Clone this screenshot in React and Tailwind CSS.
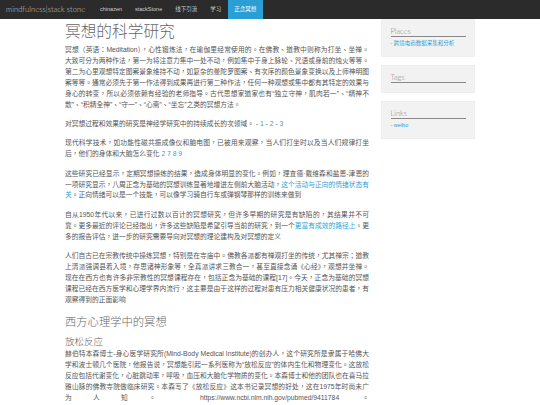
const cjk = "font-['Liberation_Sans','Noto_Sans_CJK_TC',sans-serif]"

function NavLink({ children, active }) {
  return (
    <a className={`flex items-center px-[6.5px] text-[5.5px] ${active ? 'bg-[#2a9fd6] text-white' : 'text-[#d0d0d0]'}`}>
      {children}
    </a>
  )
}

function Panel({ title, children, className }) {
  return (
    <div className={`bg-[#f2f2f2] border border-[#eeeeee] px-[8.5px] ${className}`}>
      <div className="border-b border-[#888888] text-[7.5px] leading-[9px] font-light text-[#888888] font-['Lato',sans-serif] mt-[6.5px]">
        {title}
      </div>
      {children}
    </div>
  )
}

function A({ children }) {
  return <a className="text-[#2a9fd6]">{children}</a>
}

function P({ children }) {
  return <p className="mb-[8.5px] text-justify">{children}</p>
}

export default function App() {
  return (
    <div className={`h-[405px] w-[540px] overflow-hidden bg-white ${cjk}`}>
      <nav className="flex h-[19px] items-stretch bg-[#2b2b2b]">
        <a className="flex w-[93.5px] items-center pl-[6px] text-[7.5px] tracking-[0.1px] text-[#cccccc] font-['Lato','Noto_Sans_CJK_SC',sans-serif] font-light">
          mindfulness|stack stone
        </a>
        <NavLink>chinazen</NavLink>
        <NavLink>stackStone</NavLink>
        <NavLink>线下引流</NavLink>
        <NavLink>学习</NavLink>
        <NavLink active>正念冥想</NavLink>
      </nav>
      <div className="flex">
        <main className="ml-[65px] w-[304px] text-[6.75px] leading-[10.9px] text-[#555555]">
          <h1 className="mt-[2px] mb-[4px] text-[15.7px] leading-[20px] font-light text-[#666666] font-['Noto_Sans_CJK_SC',sans-serif]">
            冥想的科学研究
          </h1>
          <P>
            冥想（英语：Meditation），心性锻炼法，在瑜伽里经常使用的。在佛教、道教中则称为打坐、坐禅。大致可分为两种作法，第一为将注意力集中一处不动，例如集中于身上脉轮、咒语或身前的烛火等等。第二为心里观想特定图案景象维持不动，如复杂的曼陀罗图案、有次序的颜色景象变换以及上师神明图案等等。通常必须先于第一作法得到成果再进行第二种作法，任何一种观想或集中都有其特定的效果与身心的转变，所以必须依赖有经验的老师指导。古代思想家道家也有“独立守神，肌肉若一”、“精神不散”、“积精全神”、“守一”、“心斋”、“坐忘”之类的冥想方法。
          </P>
          <P>
            对冥想过程和效果的研究是神经学研究中的持续成长的次领域。 - <A>1</A> - <A>2</A> - <A>3</A>
          </P>
          <P>
            现代科学技术，如功能性磁共振成像仪和脑电图，已被用来观察，当人们打坐时以及当人们规律打坐后，他们的身体和大脑怎么变化 <A>2 7 8 9</A>
          </P>
          <P>
            这些研究已经显示，定期冥想操练的结果，造成身体明显的变化。例如，理查德·戴维森和盐恩-津恩的一项研究显示，八周正念为基础的冥想训练显著地增进左侧前大脑活动，<A>这个活动与正向的情绪状态有关</A>。正向情绪可以是一个技能，可以像学习骑自行车或弹钢琴那样的训练来做到
          </P>
          <P>
            自从1950年代以来，已进行过数以百计的冥想研究，但许多早期的研究是有缺陷的，其结果并不可靠。更多最近的评论已经指出，许多这些缺陷是希望引导当前的研究，到一个<A>更富有成效的路径上</A>。更多的报告评估，进一步的研究需要导向对冥想的理论建构及对冥想的定义
          </P>
          <P>
            人们自古已在宗教传统中操练冥想，特别是在寺庙中。佛教各派都有禅观打坐的传统，尤其禅宗；道教上清派强调县着入境，存思诸神形象等，全真派讲求三教合一，甚至直接念诵《心经》，观想并坐禅。现在在西方也有许多非宗教性的冥想课程存在，包括正念为基础的课程[17]。今天，正念为基础的冥想课程已经在西方医学和心理学界内流行，这主要是由于这样的过程对患有压力相关健康状况的患者，有观察得到的正面影响
          </P>
          <h2 className="mt-[7px] mb-[6px] text-[11.3px] leading-[15px] font-light text-[#666666] font-['Noto_Sans_CJK_SC',sans-serif]">
            西方心理学中的冥想
          </h2>
          <h3 className="mb-[2px] text-[9.5px] leading-[12px] font-light text-[#666666] font-['Noto_Sans_CJK_SC',sans-serif]">
            放松反应
          </h3>
          <p className="text-justify [text-align-last:justify]">
            赫伯特本森博士-身心医学研究所(Mind-Body Medical Institute)的创办人，这个研究所是隶属于哈佛大学和波士顿几个医院，他报告说，冥想能引起一系列医称为“放松反应”的体内生化和物理变化。这放松反应包括代谢变化，心脏跳动率，呼吸，血压和大脑化学物质的变化。本森博士和他的团队也在喜马拉雅山脉的佛教寺院做临床研究。本森写了《放松反应》这本书记录冥想的好处，这在1975年时尚未广为人知。 https://www.ncbi.nlm.nih.gov/pubmed/9411784 。
          </p>
        </main>
        <aside className="ml-[12px] flex w-[94px] flex-col gap-[8px]">
          <Panel title="Places" className="h-[38px]">
            <div className="mt-[2px] text-[5.5px] leading-[8px] text-[#2a9fd6]">- 跨境电商数据采集和分析</div>
          </Panel>
          <Panel title="Tags" className="h-[28px]" />
          <Panel title="Links" className="h-[38px]">
            <div className="mt-[2px] text-[5.5px] leading-[8px] text-[#2a9fd6]">- weibo</div>
          </Panel>
        </aside>
      </div>
    </div>
  )
}
